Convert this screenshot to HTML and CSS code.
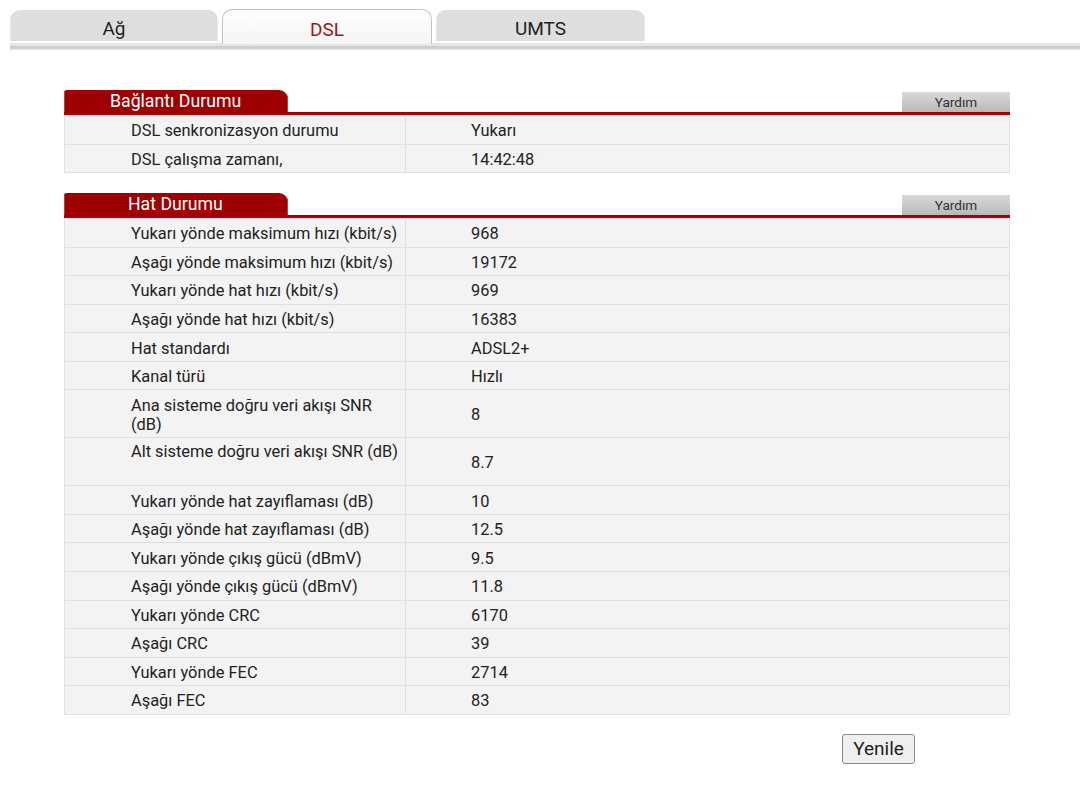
FILE: index.html
```html
<!DOCTYPE html>
<html lang="tr">
<head>
<meta charset="utf-8">
<title>DSL</title>
<link rel="stylesheet" href="styles.css">
</head>
<body>
<div class="tabbar">
  <div class="tab">Ağ</div>
  <div class="tab active">DSL</div>
  <div class="tab">UMTS</div>
</div>
<div class="tabline"></div>

<div class="section first">
  <div class="sec-head">
    <div class="sec-title">Bağlantı Durumu</div>
    <div class="help">Yardım</div>
  </div>
  <div class="redline"></div>
  <table class="data">
    <tr><td class="lbl">DSL senkronizasyon durumu</td><td class="val">Yukarı</td></tr>
    <tr><td class="lbl">DSL çalışma zamanı,</td><td class="val">14:42:48</td></tr>
  </table>
</div>

<div class="section">
  <div class="sec-head">
    <div class="sec-title">Hat Durumu</div>
    <div class="help">Yardım</div>
  </div>
  <div class="redline"></div>
  <table class="data">
    <tr><td class="lbl">Yukarı yönde maksimum hızı (kbit/s)</td><td class="val">968</td></tr>
    <tr><td class="lbl">Aşağı yönde maksimum hızı (kbit/s)</td><td class="val">19172</td></tr>
    <tr><td class="lbl">Yukarı yönde hat hızı (kbit/s)</td><td class="val">969</td></tr>
    <tr><td class="lbl">Aşağı yönde hat hızı (kbit/s)</td><td class="val">16383</td></tr>
    <tr><td class="lbl">Hat standardı</td><td class="val">ADSL2+</td></tr>
    <tr><td class="lbl">Kanal türü</td><td class="val">Hızlı</td></tr>
    <tr class="tall"><td class="lbl">Ana sisteme doğru veri akışı SNR<br>(dB)</td><td class="val">8</td></tr>
    <tr class="tall"><td class="lbl top">Alt sisteme doğru veri akışı SNR (dB)</td><td class="val">8.7</td></tr>
    <tr><td class="lbl">Yukarı yönde hat zayıflaması (dB)</td><td class="val">10</td></tr>
    <tr><td class="lbl">Aşağı yönde hat zayıflaması (dB)</td><td class="val">12.5</td></tr>
    <tr><td class="lbl">Yukarı yönde çıkış gücü (dBmV)</td><td class="val">9.5</td></tr>
    <tr><td class="lbl">Aşağı yönde çıkış gücü (dBmV)</td><td class="val">11.8</td></tr>
    <tr><td class="lbl">Yukarı yönde CRC</td><td class="val">6170</td></tr>
    <tr><td class="lbl">Aşağı CRC</td><td class="val">39</td></tr>
    <tr><td class="lbl">Yukarı yönde FEC</td><td class="val">2714</td></tr>
    <tr><td class="lbl">Aşağı FEC</td><td class="val">83</td></tr>
  </table>
</div>

<div class="actions">
  <button class="btn" type="button">Yenile</button>
</div>
</body>
</html>
```
FILE: styles.css
```css
html, body {
  margin: 0;
  padding: 0;
  background: #ffffff;
}
body {
  font-family: Roboto, "Noto Sans", "Liberation Sans", sans-serif;
  color: #222222;
}
.tabbar {
  display: flex;
  align-items: flex-end;
  gap: 4px;
  padding: 9px 0 0 10px;
  position: relative;
  z-index: 2;
}
.tab {
  width: 208px;
  height: 31px;
  box-sizing: border-box;
  margin-bottom: 2px;
  background: #dedede;
  border-radius: 10px 10px 0 0;
  display: flex;
  align-items: center;
  justify-content: center;
  font-size: 19px;
  color: #222222;
  padding-top: 6px;
  box-shadow: inset 12px 0 0 -11px #e8e8e8, inset -12px 0 0 -11px #e8e8e8;
}
.tab.active {
  width: 210px;
  height: 35px;
  margin-bottom: -1px;
  background: linear-gradient(#ffffff, #f4f4f4);
  border: 1px solid #c4c4c4;
  border-bottom: none;
  color: #a31515;
  padding-top: 5px;
  box-shadow: none;
}
.tab.active + .tab { width: 209px; }
.tabline {
  margin-left: 10px;
  height: 7px;
  background: linear-gradient(#e6e6e6 0, #e6e6e6 3px, #c9c9c9 3px, #d6d6d6 6px, #ececec 7px);
}
.section {
  margin: 20px 0 0 64px;
  width: 946px;
}
.section.first {
  margin-top: 40px;
}
.sec-head {
  display: flex;
  align-items: flex-end;
  height: 22px;
}
.sec-title {
  width: 224px;
  height: 22px;
  box-sizing: border-box;
  background: #9e0000;
  color: #ffffff;
  font-size: 17.7px;
  line-height: 22px;
  padding-left: 46px;
  border-radius: 3px 9px 0 0;
  box-shadow: inset 11px 0 0 -10px #b84040, inset -11px 0 0 -10px #b84040;
}
.section:not(.first) .sec-title {
  padding-left: 64px;
}
.help {
  margin-left: auto;
  width: 108px;
  height: 20px;
  background: linear-gradient(#d9d9d9, #b9b9b9);
  color: #333333;
  font-size: 13.6px;
  line-height: 20px;
  text-align: center;
}
.redline {
  height: 3px;
  background: linear-gradient(#9e0000, #b00000);
}
.data {
  width: 946px;
  border-collapse: collapse;
  table-layout: fixed;
  font-size: 16.4px;
}
.data tr {
  height: 28.55px;
  background: #f3f3f3;
}
.data tr.tall {
  height: 48px;
}
.data td {
  border: 1px solid #e0e0e0;
  padding: 5px 0 3px 0;
  line-height: 19px;
  vertical-align: middle;
}
.data td.lbl {
  width: 341px;
  padding-left: 66px;
  box-sizing: border-box;
  white-space: nowrap;
}
.data td.lbl.top {
  vertical-align: top;
  padding-top: 4px;
}
.data td.val {
  padding-left: 65px;
}
.actions {
  display: flex;
  justify-content: flex-end;
  width: 1010px;
  padding-right: 95px;
  box-sizing: border-box;
  margin-top: 19px;
}
.btn {
  font-family: Roboto, "Noto Sans", "Liberation Sans", sans-serif;
  font-size: 19px;
  color: #222222;
  background: #efefef;
  border: 1px solid #8a8a8a;
  border-radius: 3px;
  width: 73px;
  height: 30px;
  padding: 0;
}
```
